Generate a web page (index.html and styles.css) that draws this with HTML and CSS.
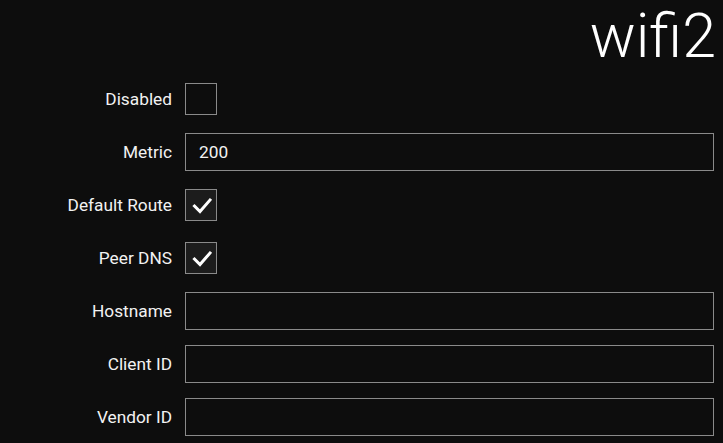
FILE: index.html
```html
<!DOCTYPE html>
<html>
<head>
<meta charset="utf-8">
<link rel="stylesheet" href="styles.css">
</head>
<body>
<div class="page">
  <h1 class="title">wifi2</h1>
  <form class="form">
    <label class="lbl">Disabled</label>
    <div class="field"><span class="check"></span></div>

    <label class="lbl">Metric</label>
    <div class="field"><input class="input" type="text" value="200"></div>

    <label class="lbl">Default Route</label>
    <div class="field"><span class="check on"><svg viewBox="0 0 30 30" width="30" height="30"><polyline points="8.5,16 14,21.5 24,10" fill="none" stroke="#fff" stroke-width="3" stroke-linecap="square"/></svg></span></div>

    <label class="lbl">Peer DNS</label>
    <div class="field"><span class="check on"><svg viewBox="0 0 30 30" width="30" height="30"><polyline points="8.5,16 14,21.5 24,10" fill="none" stroke="#fff" stroke-width="3" stroke-linecap="square"/></svg></span></div>

    <label class="lbl">Hostname</label>
    <div class="field"><input class="input" type="text" value=""></div>

    <label class="lbl">Client ID</label>
    <div class="field"><input class="input" type="text" value=""></div>

    <label class="lbl">Vendor ID</label>
    <div class="field"><input class="input" type="text" value=""></div>
  </form>
</div>
</body>
</html>
```
FILE: styles.css
```css
html, body {
  margin: 0;
  padding: 0;
  background: #0d0d0d;
  color: #f2f2f2;
  font-family: Roboto, "Liberation Sans", sans-serif;
}
.page {
  width: 723px;
  height: 443px;
  overflow: hidden;
  padding: 0 9px 0 0;
  box-sizing: border-box;
}
.title {
  margin: 0 -2px 0 0;
  height: 72px;
  text-align: right;
  font-weight: 300;
  font-size: 61px;
  line-height: 72px;
  color: #fff;
}
.form {
  display: grid;
  grid-template-columns: 172px 1fr;
  grid-auto-rows: 53px;
  column-gap: 13px;
  margin: 0;
}
.lbl {
  display: flex;
  align-items: center;
  justify-content: flex-end;
  font-size: 17.3px;
  color: #f2f2f2;
}
.field {
  display: flex;
  align-items: center;
}
.check {
  width: 32px;
  height: 32px;
  box-sizing: border-box;
  border: 1px solid #8a8a8a;
  background: #0d0d0d;
  display: flex;
  align-items: center;
  justify-content: center;
}
.check.on {
  background: #1c1c1c;
}
.input {
  width: 100%;
  height: 38px;
  box-sizing: border-box;
  border: 1px solid #8a8a8a;
  background: #0d0d0d;
  color: #f2f2f2;
  font-family: Roboto, "Liberation Sans", sans-serif;
  font-size: 17.3px;
  padding: 0 13px;
  margin: 0;
  outline: none;
  border-radius: 0;
}
```
